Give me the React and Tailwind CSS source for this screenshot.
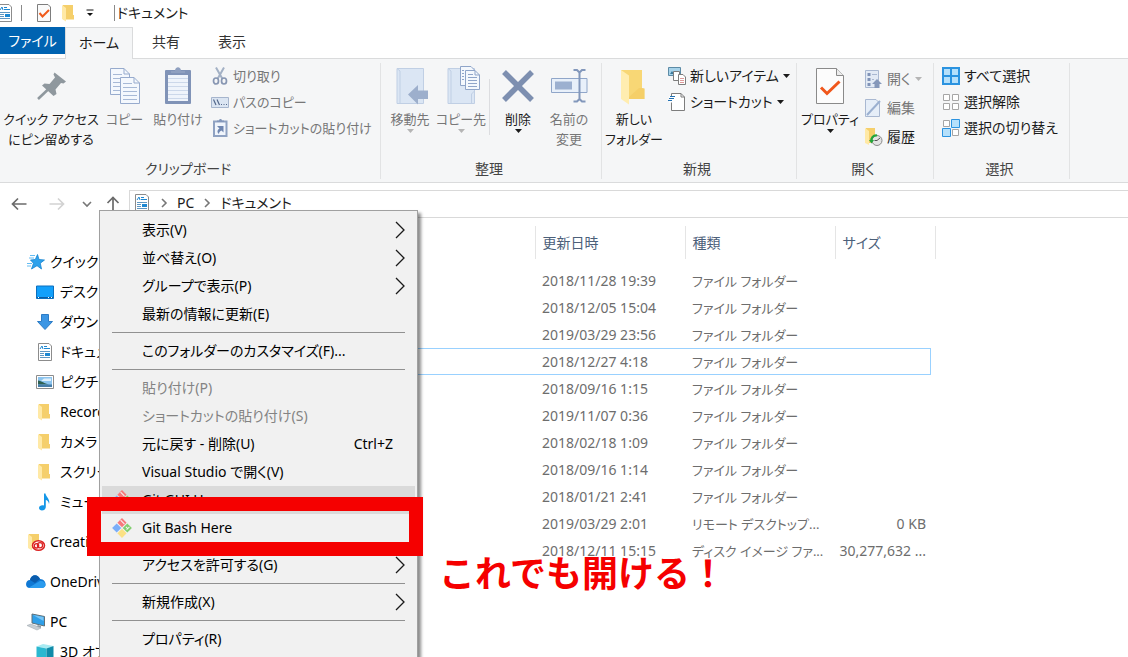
import { useState } from "react";

/* ============================================================
   DATA
============================================================ */

const TABS = ["ホーム", "共有", "表示"];

const NAV_ITEMS = [
  { label: "クイック アクセス", icon: StarIcon, top: true },
  { label: "デスクトップ", icon: DesktopIcon },
  { label: "ダウンロード", icon: DownloadIcon },
  { label: "ドキュメント", icon: DocumentIcon },
  { label: "ピクチャ", icon: PictureIcon },
  { label: "Recorded", icon: FolderIcon },
  { label: "カメラ ロール", icon: FolderIcon },
  { label: "スクリーンショット", icon: FolderIcon },
  { label: "ミュージック", icon: MusicIcon },
  { label: "Creative Cloud", icon: CreativeIcon, top: true, gap: true },
  { label: "OneDrive", icon: CloudIcon, top: true, gap: true },
  { label: "PC", icon: ComputerIcon, top: true, gap: true },
  { label: "3D オブジェクト", icon: CubeIcon },
];

const FILES = [
  { date: "2018/11/28 19:39", type: "ファイル フォルダー" },
  { date: "2018/12/05 15:04", type: "ファイル フォルダー" },
  { date: "2019/03/29 23:56", type: "ファイル フォルダー" },
  { date: "2018/12/27 4:18", type: "ファイル フォルダー" },
  { date: "2018/09/16 1:15", type: "ファイル フォルダー" },
  { date: "2019/11/07 0:36", type: "ファイル フォルダー" },
  { date: "2018/02/18 1:09", type: "ファイル フォルダー" },
  { date: "2018/09/16 1:14", type: "ファイル フォルダー" },
  { date: "2018/01/21 2:41", type: "ファイル フォルダー" },
  { date: "2019/03/29 2:01", type: "リモート デスクトップ...", size: "0 KB" },
  { date: "2018/12/11 15:15", type: "ディスク イメージ ファ...", size: "30,277,632 ..." },
];

const MENU_ITEMS = [
  { label: "表示(V)", submenu: true },
  { label: "並べ替え(O)", submenu: true },
  { label: "グループで表示(P)", submenu: true },
  { label: "最新の情報に更新(E)" },
  { divider: true },
  { label: "このフォルダーのカスタマイズ(F)..." },
  { divider: true },
  { label: "貼り付け(P)", disabled: true },
  { label: "ショートカットの貼り付け(S)", disabled: true },
  { label: "元に戻す - 削除(U)", shortcut: "Ctrl+Z" },
  { label: "Visual Studio で開く(V)" },
  { label: "Git GUI Here", git: true, hover: true },
  { label: "Git Bash Here", git: true, marked: true },
  { divider: true },
  { label: "アクセスを許可する(G)", submenu: true },
  { divider: true },
  { label: "新規作成(X)", submenu: true },
  { divider: true },
  { label: "プロパティ(R)" },
];

/* ============================================================
   PAGE
============================================================ */

export default function App() {
  const [tab, setTab] = useState("ホーム");
  const [selected, setSelected] = useState(3);

  return (
    <div className="relative flex h-screen flex-col overflow-hidden bg-white font-['Noto_Sans','Noto_Sans_CJK_JP',sans-serif] text-sm leading-5 text-[#1b1b1b] [font-feature-settings:'palt']">
      <TitleBar />

      <nav className="flex h-8 shrink-0 border-b border-[#dadbdc]">
        <button className="mb-1 w-[65px] bg-[#0063b1] text-white">ファイル</button>
        {TABS.map((name) => (
          <button
            key={name}
            onClick={() => setTab(name)}
            className={
              name === tab
                ? "-mb-px w-[68px] border border-b-0 border-[#dadbdc] bg-[#f5f6f7] pb-0.5"
                : "w-[66px] pb-0.5 text-[#333]"
            }
          >
            {name}
          </button>
        ))}
      </nav>

      <Ribbon />
      <AddressBar />

      <div className="flex min-h-0 flex-1">
        <Sidebar />
        <main className="min-w-0 flex-1 overflow-hidden pt-2">
          <FileTable selected={selected} onSelect={setSelected} />
        </main>
      </div>

      <ContextMenu />

      <p className="absolute left-[439px] top-[554px] text-[36px] leading-10 font-bold text-[#f50000] [font-feature-settings:normal]">
        これでも開ける！
      </p>
    </div>
  );
}

function TitleBar() {
  return (
    <header className="flex h-[27px] shrink-0 items-center pb-0.5">
      <DocumentIcon className="-ml-1 size-[18px]" />
      <span className="ml-[7px] h-4 w-px bg-[#8a8a8a]" />
      <CheckPageIcon className="ml-[14px] h-5 w-4" />
      <FolderIcon className="ml-2 size-[18px]" />
      <svg viewBox="0 0 8 8" className="ml-2 size-2" aria-hidden="true">
        <path d="M0.500 1H7.500" stroke="#111" />
        <path d="M1 4H7L4 7Z" fill="#111" />
      </svg>
      <span className="ml-5 h-4 w-px bg-[#8a8a8a]" />
      <h1 className="ml-0.5">ドキュメント</h1>
    </header>
  );
}

/* ============================================================
   RIBBON
============================================================ */

function Ribbon() {
  return (
    <section className="flex h-[124px] shrink-0 border-b border-[#dadbdc] bg-[#f5f6f7]">
      <RibbonGroup title="クリップボード" className="w-[381px]">
        <BigButton icon={PinIcon} lines={["クイック アクセス", "にピン留めする"]} className="w-[102px]" />
        <BigButton icon={CopyIcon} lines={["コピー"]} disabled className="w-[45px]" />
        <BigButton icon={PasteIcon} lines={["貼り付け"]} disabled className="w-[62px]" />
        <SmallList className="ml-0.5 text-[13px]">
          <SmallButton icon={CutIcon} label="切り取り" disabled />
          <SmallButton icon={PathIcon} label="パスのコピー" disabled />
          <SmallButton icon={PasteLinkIcon} label="ショートカットの貼り付け" disabled />
        </SmallList>
      </RibbonGroup>

      <RibbonGroup title="整理" className="w-[221px]">
        <BigButton icon={MoveToIcon} lines={["移動先"]} arrow disabled className="ml-1 w-[50px]" />
        <BigButton icon={CopyToIcon} lines={["コピー先"]} arrow disabled className="w-[52px]" />
        <span className="mx-0.5 mt-4 h-14 w-px bg-[#dcdde0]" />
        <BigButton icon={DeleteIcon} lines={["削除"]} arrow className="w-[52px]" />
        <BigButton icon={RenameIcon} lines={["名前の", "変更"]} disabled className="w-[50px]" />
      </RibbonGroup>

      <RibbonGroup title="新規" className="w-[195px]">
        <BigButton icon={BigFolderIcon} lines={["新しい", "フォルダー"]} className="w-[64px]" />
        <SmallList className="ml-0.5">
          <SmallButton icon={NewItemIcon} label="新しいアイテム" arrow />
          <SmallButton icon={ShortcutIcon} label="ショートカット" arrow />
        </SmallList>
      </RibbonGroup>

      <RibbonGroup title="開く" className="w-[137px]">
        <BigButton icon={PropertiesIcon} lines={["プロパティ"]} arrow className="w-[66px]" />
        <SmallList className="ml-0.5 pt-[3px]" loose>
          <SmallButton icon={OpenIcon} label="開く" arrow disabled />
          <SmallButton icon={EditIcon} label="編集" disabled />
          <SmallButton icon={HistoryIcon} label="履歴" />
        </SmallList>
      </RibbonGroup>

      <RibbonGroup title="選択" className="w-[136px]">
        <SmallList className="ml-2">
          <SmallButton icon={SelectAllIcon} label="すべて選択" />
          <SmallButton icon={SelectNoneIcon} label="選択解除" />
          <SmallButton icon={SelectInvertIcon} label="選択の切り替え" />
        </SmallList>
      </RibbonGroup>
    </section>
  );
}

function RibbonGroup({ title, className, children }) {
  return (
    <div className={`flex shrink-0 flex-col pt-1 pb-[3px] ${className}`}>
      <div className="flex flex-1 flex-col border-r border-[#e2e3e4]">
        <div className="flex h-24 shrink-0">{children}</div>
        <h2 className="pr-1 text-center text-[#444]">{title}</h2>
      </div>
    </div>
  );
}

function BigButton({ icon: Icon, lines, disabled, arrow, className }) {
  return (
    <button
      disabled={disabled}
      className={`flex shrink-0 flex-col items-center text-[13px] whitespace-nowrap ${disabled ? "text-[#777]" : ""} ${className}`}
    >
      <span className="flex h-[46px] items-center">
        <Icon className="size-10" />
      </span>
      {lines.map((line) => (
        <span key={line}>{line}</span>
      ))}
      {arrow && <Caret disabled={disabled} />}
    </button>
  );
}

function SmallList({ className, loose, children }) {
  return (
    <div className={`flex flex-col items-start ${loose ? "gap-[3px]" : ""} ${className}`}>
      {children}
    </div>
  );
}

function SmallButton({ icon: Icon, label, disabled, arrow }) {
  return (
    <button
      disabled={disabled}
      className={`flex h-[26px] items-center gap-1 whitespace-nowrap ${disabled ? "text-[#777]" : ""}`}
    >
      <Icon className="size-[18px]" />
      {label}
      {arrow && <Caret disabled={disabled} />}
    </button>
  );
}

function Caret({ disabled }) {
  return (
    <svg
      viewBox="0 0 7 4"
      className={`h-1 w-[7px] shrink-0 ${disabled ? "text-[#b5b5b5]" : ""}`}
      aria-hidden="true"
    >
      <path d="M0 0H7L3.500 4Z" fill="currentColor" />
    </svg>
  );
}

/* ============================================================
   ADDRESS BAR
============================================================ */

function AddressBar() {
  return (
    <div className="flex h-[35px] shrink-0 pt-[7px]">
      <div className="flex w-[129px] items-center">
        <button aria-label="戻る" className="ml-2.5">
          <ArrowGlyph className="size-[18px] text-[#6b6b6b]" />
        </button>
        <button aria-label="進む" className="ml-5" disabled>
          <ArrowGlyph className="size-[18px] rotate-180 text-[#d2d2d2]" />
        </button>
        <button aria-label="履歴" className="ml-4">
          <ChevronGlyph className="size-2.5 rotate-90 text-[#777]" />
        </button>
        <button aria-label="上へ" className="ml-3">
          <ArrowGlyph className="size-[18px] rotate-90 text-[#6b6b6b]" />
        </button>
      </div>
      <div className="flex flex-1 items-center border border-r-0 border-[#d9d9d9] pb-0.5 pl-[3px]">
        <DocumentIcon className="size-[18px]" />
        <ChevronGlyph className="mx-2 size-2.5 text-[#777]" />
        <span>PC</span>
        <ChevronGlyph className="mx-2 size-2.5 text-[#777]" />
        <span>ドキュメント</span>
      </div>
    </div>
  );
}

/* ============================================================
   SIDEBAR + FILE TABLE
============================================================ */

function Sidebar() {
  return (
    <aside className="w-[300px] shrink-0 overflow-hidden pt-[29px]">
      <ul>
        {NAV_ITEMS.map(({ label, icon: Icon, top, gap }) => (
          <li key={label} className={gap ? "mt-2.5" : ""}>
            <a
              href="#"
              className={`flex h-[30px] items-center whitespace-nowrap text-black ${top ? "gap-1 pl-[26px]" : "gap-1.5 pl-9"}`}
            >
              <Icon className={top ? "size-5" : "size-[18px]"} />
              {label}
            </a>
          </li>
        ))}
      </ul>
    </aside>
  );
}

function FileTable({ selected, onSelect }) {
  return (
    <table className="w-[635px] table-fixed text-left whitespace-nowrap text-[#6d6d6d]">
      <thead>
        <tr className="h-[33px] text-[#4c607a]">
          <td className="w-[235px] border-r border-[#e5e5e5]" />
          <th className="w-[150px] border-r border-[#e5e5e5] pl-[7px] font-normal">更新日時</th>
          <th className="w-[150px] border-r border-[#e5e5e5] pl-[7px] font-normal">種類</th>
          <th className="w-[100px] border-r border-[#e5e5e5] pl-[7px] font-normal">サイズ</th>
        </tr>
      </thead>
      <tbody className="before:block before:h-2">
        {FILES.map((file, i) => (
          <tr key={file.date} onClick={() => onSelect(i)} className="relative h-[27px]">
            <td />
            <td className="pl-[7px]">{file.date}</td>
            <td className="pl-[7px] text-[13px]">{file.type}</td>
            <td
              className={
                i === selected
                  ? "after:absolute after:inset-y-0 after:left-0 after:right-1 after:border after:border-[#99d1ff]"
                  : "pr-[9px] text-right"
              }
            >
              {file.size}
            </td>
          </tr>
        ))}
      </tbody>
    </table>
  );
}

/* ============================================================
   CONTEXT MENU
============================================================ */

function ContextMenu() {
  return (
    <ul
      role="menu"
      className="absolute left-[99px] top-[210px] w-[319px] border border-[#a0a0a0] bg-[#f1f1f1] px-0.5 pt-[5px] pb-1 text-black shadow-[3px_3px_3px_rgba(0,0,0,0.45)]"
    >
      {MENU_ITEMS.map((item, i) =>
        item.divider ? (
          <li key={i} role="separator" className="flex h-[9px] items-center px-2.5">
            <span className="h-px flex-1 bg-[#919191]" />
          </li>
        ) : (
          <li key={i} role="none" className="relative">
            <button
              role="menuitem"
              disabled={item.disabled}
              className={`flex h-7 w-full items-center pr-2.5 text-left whitespace-nowrap ${item.hover ? "bg-[#dadada]" : ""} ${item.disabled ? "text-[#838383]" : ""}`}
            >
              <span className="flex w-10 shrink-0 justify-center">
                {item.git && <GitIcon className="size-5" />}
              </span>
              <span className="flex-1">{item.label}</span>
              {item.shortcut && <span className="pr-3">{item.shortcut}</span>}
              {item.submenu && (
                <svg viewBox="0 0 10 18" className="h-[18px] w-2.5" aria-hidden="true">
                  <path d="M1 1L9 9L1 17" fill="none" stroke="#1a1a1a" strokeWidth="1.300" />
                </svg>
              )}
            </button>
            {item.marked && (
              <span className="pointer-events-none absolute -left-[15px] -top-[17px] z-10 h-[59px] w-[336px] border-[14px] border-[#f50000]" />
            )}
          </li>
        )
      )}
    </ul>
  );
}

/* ============================================================
   ICONS
============================================================ */

function Icon({ size = 18, className, children }) {
  return (
    <svg
      viewBox={`0 0 ${size} ${size}`}
      className={`shrink-0 ${className}`}
      fill="none"
      aria-hidden="true"
    >
      {children}
    </svg>
  );
}

function ArrowGlyph({ className }) {
  return (
    <Icon className={className}>
      <path d="M16.500 9H2.500M8 3.500L2.500 9L8 14.500" stroke="currentColor" strokeWidth="1.700" />
    </Icon>
  );
}

function ChevronGlyph({ className }) {
  return (
    <Icon size={10} className={className}>
      <path d="M3 1L7 5L3 9" stroke="currentColor" strokeWidth="1.600" />
    </Icon>
  );
}

function DocumentIcon({ className }) {
  return (
    <Icon className={className}>
      <path d="M2.500 0.500H13L15.500 3V17.500H2.500Z" fill="#fff" stroke="#8c8c8c" />
      <path d="M4 6L6 3L7 6M8 3.500H11M8 5.500H14" stroke="#1e88d2" />
      <path d="M4 8.500H14M4 10.500H8M4 12.500H8M4 14.500H14" stroke="#5f97c2" />
      <path d="M9 10H14V13H9Z" fill="#1e88d2" />
    </Icon>
  );
}

function CheckPageIcon({ className }) {
  return (
    <svg viewBox="0 0 16 20" className={`shrink-0 ${className}`} fill="none" aria-hidden="true">
      <path d="M1.500 1.500H12L14.500 4V18.500H1.500Z" fill="#fafafa" stroke="#7d7d7d" />
      <path d="M3.500 10L6.500 13.500L13 7" stroke="#f05a1a" strokeWidth="2" />
    </svg>
  );
}

function FolderIcon({ className }) {
  return (
    <Icon className={className}>
      <path d="M3 1H13V11H14V15.500H3Z" fill="#f5cf6b" />
      <path d="M2 1L6 4V17.500L2 15Z" fill="#ffe9a6" />
    </Icon>
  );
}

function StarIcon({ className }) {
  return (
    <Icon size={20} className={className}>
      <path d="M11.500 2.500L13 7.500L18.500 8L14.300 11.200L15.500 17L11 13.700L5.500 17L7.500 11.300L4.500 8L9.300 7.500Z" fill="#2ea2ec" stroke="#1784cf" strokeWidth="0.800" />
      <path d="M4 3.500H9M3 6H8M1 11.500H6M1 14H5" stroke="#66bdf2" />
    </Icon>
  );
}

function DesktopIcon({ className }) {
  return (
    <Icon className={className}>
      <path d="M0.500 3H17.500V15.500H0.500Z" fill="#12a0fb" stroke="#0c6fbd" />
      <path d="M1 14.500H17" stroke="#0a5ca3" />
      <path d="M2 14.500H3M12 14.500H13M15 14.500H16" stroke="#fff" />
    </Icon>
  );
}

function DownloadIcon({ className }) {
  return (
    <Icon className={className}>
      <path d="M5.500 1.500H12.500V8.500H16.500L9 16.500L1.500 8.500H5.500Z" fill="#3c96e4" stroke="#2d7cc6" />
    </Icon>
  );
}

function PictureIcon({ className }) {
  return (
    <Icon className={className}>
      <path d="M0.500 2.500H17.500V15.500H0.500Z" fill="#fff" stroke="#8c8c8c" />
      <path d="M2 4H16V14H2Z" fill="#8cc4ee" />
      <path d="M8 5.500H15V8H5Z" fill="#dff0fb" />
      <path d="M2 7.500C6 8 8 10.500 13 11.500H2Z" fill="#2f6152" />
      <path d="M2 11.500H16V14H2Z" fill="#467da8" />
    </Icon>
  );
}

function MusicIcon({ className }) {
  return (
    <Icon className={className}>
      <path d="M8 0.500H9.500C9.800 4 14.500 6 13 11C12.500 8 11 7 9.800 7V14C9.500 18.500 3 18.500 3 15C3 12.500 6 11.700 8 12.500Z" fill="#1597e8" />
    </Icon>
  );
}

function CreativeIcon({ className }) {
  return (
    <Icon size={20} className={className}>
      <path d="M3 2H13V16H3Z" fill="#f5cf6b" />
      <path d="M2 2L6 5V18.500L2 16Z" fill="#ffe9a6" />
      <ellipse cx="12.500" cy="13.500" rx="6" ry="4.800" fill="#fff" stroke="#dc2323" strokeWidth="1.500" />
      <circle cx="10.500" cy="13.800" r="2.200" stroke="#dc2323" strokeWidth="1.300" />
      <circle cx="14" cy="13.300" r="2.600" stroke="#dc2323" strokeWidth="1.300" />
    </Icon>
  );
}

function CloudIcon({ className }) {
  return (
    <Icon size={20} className={className}>
      <path d="M4 16C-1.500 16 -1 8 4 8C5 2 12 1.500 14 7C20.500 7 21.500 16 16 16Z" fill="#0f78d4" />
      <path d="M4 8C5 2 12 1.500 14 7L9 11Z" fill="#0a5cad" />
      <path d="M3 15.500L14 9C20 8 21.500 16 16 16H4Z" fill="#2a9bee" />
    </Icon>
  );
}

function ComputerIcon({ className }) {
  return (
    <Icon size={20} className={className}>
      <path d="M6 2L18.500 4.500V14L6 11Z" fill="#2f9fe8" stroke="#5f7078" />
      <path d="M7 3L17.500 9V5Z" fill="#78c4f4" />
      <path d="M12 13L15 14V16L10 15Z" fill="#8d9ba3" />
      <path d="M1 13.500L5 12L15 16L11 18Z" fill="#c7ced3" stroke="#a4adb3" strokeWidth="0.600" />
    </Icon>
  );
}

function CubeIcon({ className }) {
  return (
    <Icon className={className}>
      <path d="M0.500 3.500L7 1L17.500 3L11 5.500Z" fill="#a9ebf2" />
      <path d="M0.500 3.500L10.500 5.500V18L0.500 15Z" fill="#2bb8d0" />
      <path d="M10.500 5.500L17.500 3V15L10.500 18Z" fill="#108ba9" />
    </Icon>
  );
}

function GitIcon({ className }) {
  return (
    <Icon size={20} className={className}>
      <g transform="rotate(45 10 10)">
        <path d="M3 3H9.500V9.500H3Z" fill="#f6797c" />
        <path d="M10.500 3H17V9.500H10.500Z" fill="#82cf70" />
        <path d="M3 10.500H9.500V17H3Z" fill="#7aaef8" />
        <path d="M10.500 10.500H17V17H10.500Z" fill="#fbe184" />
        <path d="M3.500 5.500L9 5.500M14.500 4V8M12 6.500H14.500" stroke="#f4f4f4" />
      </g>
    </Icon>
  );
}

function PinIcon({ className }) {
  return (
    <Icon size={40} className={className}>
      <path d="M23.500 6.500L35 15.500L32.500 17.500L30 17L24.500 23.500L25.500 28L22.500 30L11 19.500L13.500 17.500L18.500 18L24 11.500L22.500 8.500Z" fill="#8f989e" />
      <path d="M17 23.500L7 33" stroke="#8f989e" strokeWidth="2.600" />
    </Icon>
  );
}

function PageSheet({ x, y }) {
  return (
    <g transform={`translate(${x} ${y})`}>
      <path d="M0.500 0.500H14L19.500 6V26.500H0.500Z" fill="#f4f8fd" stroke="#97abcd" />
      <path d="M14 0.500V6H19.500" stroke="#97abcd" />
      <path d="M3 6.500H12M3 10.500H17M3 14.500H17M3 18.500H17M3 22.500H17" stroke="#a7b9d6" />
    </g>
  );
}

function CopyIcon({ className }) {
  return (
    <Icon size={40} className={className}>
      <PageSheet x={5} y={2} />
      <PageSheet x={15} y={11} />
    </Icon>
  );
}

function PasteIcon({ className }) {
  return (
    <Icon size={40} className={className}>
      <rect x="7" y="4" width="26" height="34" rx="1" fill="#8093b7" />
      <path d="M10 9H30V35H10Z" fill="#eff4fb" />
      <path d="M10 12.500H30M10 16.500H30M10 20.500H30M10 24.500H30M10 28.500H30M10 32.500H30" stroke="#ccd8ea" />
      <path d="M13 7V5H17C17 0 23 0 23 5H27V7Z" fill="#8fa0c0" />
    </Icon>
  );
}

function CutIcon({ className }) {
  return (
    <Icon className={className}>
      <path d="M5 0.500L11.500 12M13 0.500L6.500 12" stroke="#a3b1c5" strokeWidth="2" />
      <ellipse cx="5" cy="14" rx="2.500" ry="3" stroke="#8796b2" strokeWidth="1.700" />
      <ellipse cx="13" cy="14" rx="2.500" ry="3" stroke="#8796b2" strokeWidth="1.700" />
    </Icon>
  );
}

function PathIcon({ className }) {
  return (
    <Icon className={className}>
      <path d="M0.500 4.500H17.500V14.500H0.500Z" fill="#dbe5f2" stroke="#a6b5cd" />
      <path d="M2.500 6.500L5 12M6 6.500L8.500 12" stroke="#54688b" strokeWidth="1.200" />
      <path d="M10 11.500H11M12.500 11.500H13.500M15 11.500H16" stroke="#54688b" />
    </Icon>
  );
}

function PasteLinkIcon({ className }) {
  return (
    <Icon className={className}>
      <path d="M3 2.500H15.500V17H3Z" fill="#f0f5fc" stroke="#8fa2c2" strokeWidth="2" />
      <path d="M6 3V1.500H8C8 -0.500 11 -0.500 11 1.500H13V3Z" fill="#8397bb" />
      <path d="M6 7H12.500V13.500L10.500 11.500C8.500 12.500 8 13.500 8 15C5.500 13 6.500 10.500 8.500 9.500Z" fill="#6f86b0" />
    </Icon>
  );
}

function MoveToIcon({ className }) {
  return (
    <Icon size={40} className={className}>
      <path d="M7 2.500H33.500V37.500H7Z" fill="#dbe6f4" stroke="#c0cfe4" />
      <path d="M7 2.500L10 5V37.500" stroke="#c0cfe4" />
      <path d="M18 28.500L28 19V24.500H38V33H28V38.500Z" fill="#9dafcc" />
    </Icon>
  );
}

function CopyToIcon({ className }) {
  return (
    <Icon size={40} className={className}>
      <path d="M7 2.500H33.500V37.500H7Z" fill="#dbe6f4" stroke="#c0cfe4" />
      <path d="M7 2.500L10 5V37.500M30.500 37.500V28L33.500 25" stroke="#c0cfe4" />
      <path d="M19.500 0.500H30L33.500 4V19.500H19.500Z" fill="#f4f8fd" stroke="#8fa5c9" />
      <path d="M24.500 4.500H34L38.500 9V23.500H24.500Z" fill="#f4f8fd" stroke="#8fa5c9" />
      <path d="M34 4.500V9H38.500M27 8.500H32M27 11.500H36M27 14.500H36M27 17.500H36M27 20.500H36M21 4.500H23M21 7.500H23M21 10.500H23M21 13.500H23" stroke="#8fa5c9" />
    </Icon>
  );
}

function DeleteIcon({ className }) {
  return (
    <Icon size={40} className={className}>
      <path d="M6 6L34 34M34 6L6 34" stroke="#7d8fb0" strokeWidth="5.500" />
    </Icon>
  );
}

function RenameIcon({ className }) {
  return (
    <Icon size={40} className={className}>
      <path d="M2.500 12.500H38V26.500H2.500Z" fill="#e8f0fa" stroke="#90a6c9" />
      <path d="M6 15.500H23V23.500H6Z" fill="#9cb0d0" />
      <path d="M24.500 4H28L30.500 6.500L33 4H36.500M30.500 6V33M24.500 35.500H28L30.500 33L33 35.500H36.500" stroke="#8297bb" strokeWidth="2" />
    </Icon>
  );
}

function BigFolderIcon({ className }) {
  return (
    <Icon size={40} className={className}>
      <path d="M7 4H28V22L30.500 23V33H7Z" fill="#f8d775" />
      <path d="M25 22H30.500V33H13Z" fill="#f2c75c" opacity="0.500" />
      <path d="M7 4L15 9.500V38.500L7 33Z" fill="#ffedb0" />
    </Icon>
  );
}

function NewItemIcon({ className }) {
  return (
    <Icon className={className}>
      <path d="M0.500 0.500H12.500V8.500H0.500Z" fill="#a7d3ea" stroke="#5c8ba6" />
      <path d="M2 7L4 4L6 7Z" fill="#3c7a9b" />
      <path d="M5.500 4.500H11.500V13.500H5.500Z" fill="#fff" stroke="#7d7d7d" />
      <path d="M10.500 7.500H15L17.500 10V17.500H10.500Z" fill="#fff" stroke="#7d7d7d" />
      <path d="M12 11.500H16M12 13.500H16M12 15.500H16" stroke="#dd9a9a" />
    </Icon>
  );
}

function ShortcutIcon({ className }) {
  return (
    <Icon className={className}>
      <path d="M3.500 0.500H13L16.500 4V17.500H3.500Z" fill="#fff" stroke="#7d7d7d" />
      <path d="M13 0.500V4H16.500" stroke="#7d7d7d" />
      <path d="M1 3H8V9.500H1Z" fill="#fff" />
      <path d="M2 3.500H7M1 5.500H6M0 7.500H4" stroke="#2271b3" strokeWidth="1.200" />
    </Icon>
  );
}

function PropertiesIcon({ className }) {
  return (
    <Icon size={40} className={className}>
      <path d="M6.500 2.500H26.500L33.500 9.500V37.500H6.500Z" fill="#fcfcfc" stroke="#8a8a8a" />
      <path d="M26.500 2.500V9.500H33.500" fill="#ececec" stroke="#8a8a8a" />
      <path d="M11 21.500L17 27.500L29.500 15.500" stroke="#f0571c" strokeWidth="3" />
    </Icon>
  );
}

function OpenIcon({ className }) {
  return (
    <Icon className={className}>
      <path d="M0.500 0.500H13.500V17.500H0.500Z" fill="#e2eaf5" stroke="#a9b8d1" />
      <path d="M2.500 3H5.500V6H2.500ZM2.500 8H5.500V11H2.500ZM2.500 13H5.500V16H2.500Z" fill="#8093b7" />
      <path d="M7 4.500H12M7 9.500H9" stroke="#a9b8d1" />
      <path d="M12 9L17 14H14.500V18H9.500V14H7Z" fill="#8598ba" />
    </Icon>
  );
}

function EditIcon({ className }) {
  return (
    <Icon className={className}>
      <path d="M0.500 0.500H11L14.500 4V17.500H0.500Z" fill="#e6eef8" stroke="#a9b8d1" />
      <path d="M2 16L15 2" stroke="#9bb0d0" strokeWidth="2" />
    </Icon>
  );
}

function HistoryIcon({ className }) {
  return (
    <Icon className={className}>
      <path d="M1 0H10V15H1Z" fill="#f5cf6b" />
      <path d="M0 0L4 3V17L0 15Z" fill="#ffe9a6" />
      <circle cx="12" cy="12.500" r="5" fill="#e3e3e3" stroke="#8a8a8a" />
      <path d="M12 12.500L15 10M12 12.500H9.500" stroke="#555" />
      <path d="M12 7.500C8 7 6 10 6.500 13" stroke="#22a43c" strokeWidth="2.200" />
      <path d="M4 12H9L6.500 15.500Z" fill="#22a43c" />
    </Icon>
  );
}

function SelectAllIcon({ className }) {
  return (
    <Icon className={className}>
      <path d="M1 1H17V17H1Z" fill="#b5e0fb" stroke="#2b93e0" strokeWidth="2" />
      <path d="M9 1V17M1 9H17" stroke="#2b93e0" strokeWidth="2" />
    </Icon>
  );
}

function SelectNoneIcon({ className }) {
  return (
    <Icon className={className}>
      <path d="M1.500 1.500H7.500V7.500H1.500ZM10.500 1.500H16.500V7.500H10.500ZM1.500 10.500H7.500V16.500H1.500ZM10.500 10.500H16.500V16.500H10.500Z" fill="#fff" stroke="#a6a6a6" />
    </Icon>
  );
}

function SelectInvertIcon({ className }) {
  return (
    <Icon className={className}>
      <path d="M1.500 1.500H7.500V7.500H1.500ZM10.500 10.500H16.500V16.500H10.500Z" fill="#fff" stroke="#a6a6a6" />
      <path d="M9.500 0.500H17.500V8.500H9.500ZM0.500 9.500H8.500V17.500H0.500Z" fill="#b5e0fb" stroke="#2b93e0" />
    </Icon>
  );
}
